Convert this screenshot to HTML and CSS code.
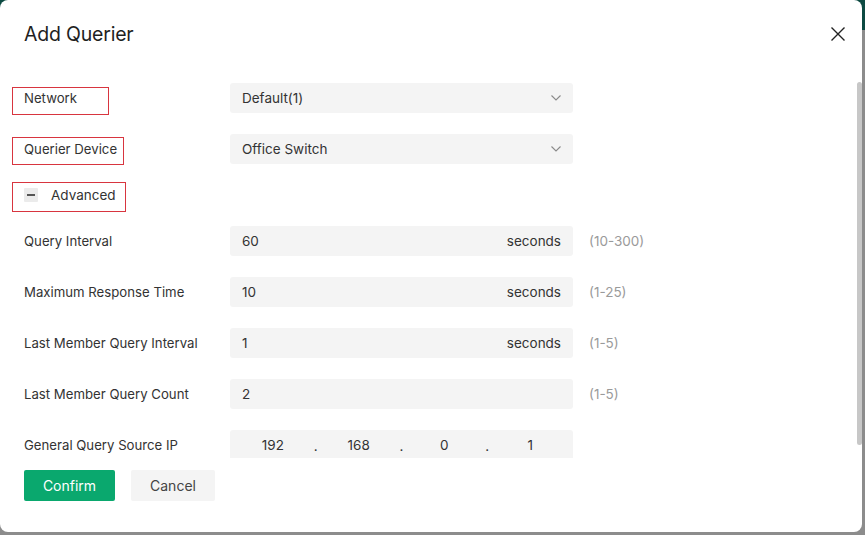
FILE: index.html
```html
<!DOCTYPE html>
<html>
<head>
<meta charset="utf-8">
<link rel="stylesheet" href="styles.css">
</head>
<body>
<div class="modal">
  <div class="header">
    <h1 class="title">Add Querier</h1>
    <button class="close" aria-label="Close">
      <svg width="16" height="16" viewBox="0 0 16 16"><path d="M1.5 1.5L14.5 14.5M14.5 1.5L1.5 14.5" stroke="#222" stroke-width="1.4" fill="none"/></svg>
    </button>
  </div>
  <div class="body">
    <div class="row">
      <div class="label"><span class="mark mark-network"></span>Network</div>
      <div class="field select"><span>Default(1)</span>
        <svg class="chev" width="10" height="6" viewBox="0 0 10 6"><path d="M0.5 0.5L5 5L9.5 0.5" stroke="#8a8a8a" stroke-width="1.1" fill="none"/></svg>
      </div>
    </div>
    <div class="row">
      <div class="label"><span class="mark mark-device"></span>Querier Device</div>
      <div class="field select"><span>Office Switch</span>
        <svg class="chev" width="10" height="6" viewBox="0 0 10 6"><path d="M0.5 0.5L5 5L9.5 0.5" stroke="#8a8a8a" stroke-width="1.1" fill="none"/></svg>
      </div>
    </div>
    <div class="row row-adv">
      <div class="label adv"><span class="mark mark-adv"></span><span class="minus"><span class="minus-bar"></span></span>Advanced</div>
    </div>
    <div class="row">
      <div class="label">Query Interval</div>
      <div class="field"><span>60</span><span class="unit">seconds</span></div>
      <div class="hint">(10-300)</div>
    </div>
    <div class="row">
      <div class="label">Maximum Response Time</div>
      <div class="field"><span>10</span><span class="unit">seconds</span></div>
      <div class="hint">(1-25)</div>
    </div>
    <div class="row">
      <div class="label">Last Member Query Interval</div>
      <div class="field"><span>1</span><span class="unit">seconds</span></div>
      <div class="hint">(1-5)</div>
    </div>
    <div class="row">
      <div class="label">Last Member Query Count</div>
      <div class="field"><span>2</span></div>
      <div class="hint">(1-5)</div>
    </div>
    <div class="row">
      <div class="label">General Query Source IP</div>
      <div class="field ip">
        <span class="seg">192</span><span class="dot">.</span>
        <span class="seg">168</span><span class="dot">.</span>
        <span class="seg">0</span><span class="dot">.</span>
        <span class="seg">1</span>
      </div>
    </div>
  </div>
  <div class="footer">
    <button class="btn primary">Confirm</button>
    <button class="btn secondary">Cancel</button>
  </div>
  <div class="scrollbar"></div>
</div>
</body>
</html>
```
FILE: styles.css
```css
* { box-sizing: border-box; }
html, body { margin: 0; padding: 0; }
body {
  width: 865px;
  height: 535px;
  overflow: hidden;
  background: linear-gradient(to bottom, #0d4a42 0, #0d4a42 30px, #8c8c8c 30px, #8c8c8c 100%);
  font-family: Inter, "Noto Sans", sans-serif;
  color: #333;
}
.modal {
  position: relative;
  width: 862px;
  height: 532px;
  background: #fff;
  border-radius: 8px;
  display: flex;
  flex-direction: column;
}
.header {
  height: 70px;
  display: flex;
  align-items: center;
  justify-content: space-between;
  padding: 0 16px 2px 24px;
}
.title {
  margin: 0;
  font-size: 19.5px;
  font-weight: 400;
  color: #1f1f1f;
  letter-spacing: -0.2px;
}
.close {
  border: 0;
  background: none;
  padding: 0;
  width: 16px;
  height: 16px;
  display: flex;
}
.body {
  height: 388px;
  overflow: hidden;
  padding: 13px 0 0 24px;
  display: flex;
  flex-direction: column;
  gap: 21px;
}
.row {
  display: flex;
  align-items: center;
  height: 30px;
  flex-shrink: 0;
}
.row-adv { height: 20px; }
.label {
  position: relative;
  width: 206px;
  font-size: 13.2px;
  color: #333;
  flex-shrink: 0;
}
.adv {
  display: flex;
  align-items: center;
  font-size: 13.5px;
}
.minus {
  width: 14px;
  height: 14px;
  background: #ebebeb;
  border-radius: 1px;
  display: flex;
  align-items: center;
  justify-content: center;
  margin-right: 13px;
}
.minus-bar {
  width: 8px;
  height: 1.3px;
  background: #555;
}
.mark {
  position: absolute;
  border: 1.5px solid #d8353f;
  pointer-events: none;
}
.mark-network { left: -12px; top: -3px; width: 97px; height: 28px; }
.mark-device { left: -12px; top: -4px; width: 112px; height: 28px; }
.mark-adv { left: -12px; top: -5px; width: 114px; height: 30px; }
.field {
  width: 343px;
  height: 30px;
  background: #f4f4f4;
  border-radius: 3px;
  display: flex;
  align-items: center;
  justify-content: space-between;
  padding: 0 12px;
  font-size: 13.5px;
  color: #333;
  flex-shrink: 0;
}
.unit { color: #333; }
.hint {
  margin-left: 16px;
  font-size: 13.5px;
  color: #9a9a9a;
}
.ip {
  padding: 0;
  justify-content: flex-start;
}
.seg {
  flex: 1;
  text-align: center;
}
.dot {
  width: 0;
  display: flex;
  justify-content: center;
  position: relative;
  top: 1px;
}
.footer {
  padding: 12px 0 0 24px;
  display: flex;
  gap: 16px;
}
.btn {
  height: 31px;
  border: 0;
  border-radius: 2px;
  font-family: Inter, "Noto Sans", sans-serif;
  font-size: 14px;
  padding: 0;
}
.primary {
  width: 91px;
  background: #0aa86e;
  color: #fff;
}
.secondary {
  width: 84px;
  background: #f4f4f4;
  color: #444;
}
.scrollbar {
  position: absolute;
  left: 857px;
  top: 82px;
  width: 5px;
  height: 363px;
  background: #c7c7c7;
  border-radius: 3px;
}
```
